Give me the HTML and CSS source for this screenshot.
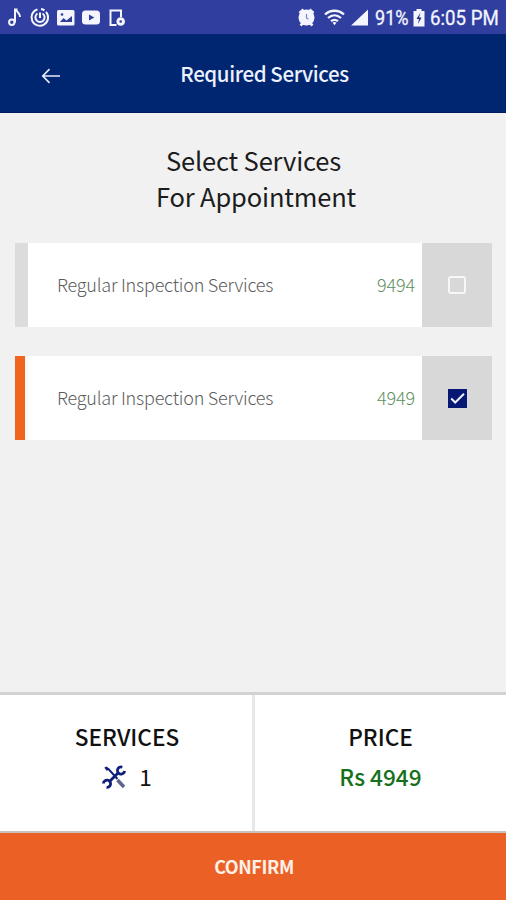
FILE: index.html
```html
<!DOCTYPE html>
<html lang="en">
<head>
<meta charset="utf-8">
<title>Required Services</title>
<link rel="stylesheet" href="styles.css">
</head>
<body>
<div class="screen">
  <div class="status">
    <svg class="status-left" width="140" height="34" viewBox="0 0 140 34" fill="none" stroke="#f4f5ff" stroke-width="2">
      <circle cx="11.800" cy="22.300" r="2.700"/><path d="M15 22.500V9.500h1.500c0 3.500 4 3 3.500 7.500"/>
      <path d="M37.500 9.400a8.300 8.300 0 1 0 8.500 2.500M41 9.100a8.300 8.300 0 0 1 3.500 1.300"/><path d="M37.500 13.500a4.600 4.600 0 1 0 5 0M40 12.500v5.500"/>
      <rect x="57" y="10" width="17.500" height="15.500" rx="1.500" fill="#f4f5ff" stroke="none"/><path d="M60 22l3.500-4 3 2.500 5.500-4.500v6z" fill="#303f9f" stroke="none"/><circle cx="62" cy="14.500" r="1.300" fill="#303f9f" stroke="none"/>
      <rect x="82" y="10.500" width="18" height="14" rx="3.500" fill="#f4f5ff" stroke="none"/><path d="M89 14.500l5.300 3-5.300 3z" fill="#303f9f" stroke="none"/>
      <path d="M121 17v-6.500h-10.500V25h6"/><circle cx="120.700" cy="21.500" r="4.300" fill="#f4f5ff" stroke="none"/><circle cx="120.700" cy="21.500" r="1.300" fill="#303f9f" stroke="none"/>
    </svg>
    <div class="status-right">
      <svg width="80" height="34" viewBox="0 0 80 34" fill="#f4f5ff">
        <circle cx="16.500" cy="17.500" r="8"/><path d="M9.500 13l4-3.500M19.500 9.500l4 3.500M10.500 25.500l3-3M22.500 25.500l-3-3" stroke="#f4f5ff" stroke-width="2.600"/><path d="M16.500 14v4l2 1.300" fill="none" stroke="#7d88c8" stroke-width="1.200"/>
        <path d="M35 14.500c5.500-5 13.500-5 19 0M38 18c4-3.500 9-3.500 13 0M41 21.200c2.300-1.800 4.700-1.800 7 0" fill="none" stroke="#f4f5ff" stroke-width="2.300"/><path d="M42.500 22.500q2-1 4 0l-2 2.800z"/>
        <path d="M61 25.500L78 9.500v16z"/>
      </svg>
      <span class="battery-text"><span>91%</span></span>
      <svg class="battery" width="14" height="34" viewBox="0 0 14 34"><path d="M.5 11h3V9h5v2h3v15.500H.5z" fill="#f4f5ff"/><path d="M7.500 12.500L3.500 19H6l-1 5 3.500-6.500H6z" fill="#202b70"/></svg>
      <span class="clock"><span>6:05 PM</span></span>
    </div>
  </div>
  <header class="header">
    <svg class="back" width="20" height="16" viewBox="0 0 20 16" fill="none" stroke="#e6eaf8" stroke-width="1.700"><path d="M19 8H2M8.500 1.200L1.800 8l6.700 6.800"/></svg>
    <div class="title">Required Services</div>
  </header>
  <main class="main">
    <h1 class="heading">Select Services<br><span class="heading-second">For Appointment</span></h1>
    <div class="service">
      <div class="stripe"></div>
      <div class="service-body"><span class="name">Regular Inspection Services</span><span class="cost">9494</span></div>
      <div class="check"><span class="box"></span></div>
    </div>
    <div class="service selected">
      <div class="stripe"></div>
      <div class="service-body"><span class="name">Regular Inspection Services</span><span class="cost">4949</span></div>
      <div class="check"><span class="box"><svg width="19" height="19" viewBox="0 0 19 19" fill="none" stroke="#f0f2ff" stroke-width="2"><path d="M3.200 9.500l4 4L16 4.700"/></svg></span></div>
    </div>
  </main>
  <section class="summary">
    <div class="cell">
      <div class="label">SERVICES</div>
      <div class="value count">
        <svg width="24" height="24" viewBox="0 0 24 24" fill="none" stroke="#10207a">
          <path d="M3.500 2.500l3 1.500 9 10" stroke-width="2"/><path d="M2.300 2.500l2.500-.8 2 2.200-2 2z" fill="#10207a" stroke="none"/>
          <path d="M15.500 15l6.500 7" stroke="#5b668f" stroke-width="3.500"/>
          <path d="M7 17l10-10" stroke-width="2.800"/>
          <path d="M20.300 2.200A3.600 3.600 0 1 0 22.600 6" stroke-width="2.800"/>
          <path d="M1.400 18.500A3.600 3.600 0 1 1 4.500 22.300" stroke-width="2.800"/>
        </svg>
        <span class="number">1</span>
      </div>
    </div>
    <div class="cell">
      <div class="label">PRICE</div>
      <div class="value amount">Rs 4949</div>
    </div>
  </section>
  <button class="confirm">CONFIRM</button>
</div>
</body>
</html>
```
FILE: styles.css
```css
* { box-sizing: border-box; }
body { margin: 0; font-family: "Noto Sans CJK SC", "Noto Sans", sans-serif; }
.screen { width: 506px; height: 900px; display: flex; flex-direction: column; background: #f1f1f1; overflow: hidden; }
.status { height: 34px; flex: none; display: flex; justify-content: space-between; background: #303f9f; color: #f4f5ff; font-family: Roboto, sans-serif; }
.status svg { display: block; }
.status-right { width: 216px; display: flex; }
.battery-text, .clock { font-size: 21px; line-height: 36px; white-space: nowrap; -webkit-text-stroke: .3px #f4f5ff; }
.battery-text { width: 38px; margin-left: 5px; }
.clock { width: 76px; margin-left: 3px; }
.battery-text span, .clock span { display: inline-block; transform-origin: 0 50%; }
.battery-text span { transform: scaleX(.86); }
.clock span { transform: scaleX(.89); }
.header { height: 79px; flex: none; display: grid; grid-template-columns: 82px 1fr; background: #002671; border-bottom: 1px solid #001d62; }
.back { margin: 34px 0 0 41px; }
.title { width: 365px; text-align: center; color: #edf1fc; font-size: 20.500px; font-weight: 500; letter-spacing: -.4px; line-height: 32px; padding-top: 23px; }
.main { flex: 1; display: flex; flex-direction: column; padding: 29px 14px 0 15px; }
.heading { margin: 0 0 30px; font-size: 25.500px; font-weight: 400; letter-spacing: -.15px; line-height: 35.500px; text-align: center; color: #1c1c1c; }
.heading-second { padding-left: 5px; }
.service { display: flex; height: 84px; margin-bottom: 29px; flex: none; }
.stripe { width: 13px; background: #dcdcdc; }
.selected .stripe { background: #f0641e; border-right: 3px solid #f8f8f8; }
.service-body { width: 394px; display: flex; justify-content: space-between; align-items: center; padding: 0 7px 2px 29px; background: #fff; font-size: 18px; font-weight: 300; color: #5c5c5c; }
.name { letter-spacing: -.22px; }
.cost { color: #5f8f5f; letter-spacing: -.1px; }
.check { flex: 1; display: flex; align-items: center; justify-content: center; background: #d8d8d8; }
.box { width: 18px; height: 18px; border: 2px solid #f7f7f7; border-radius: 3px; }
.selected .box { width: 19px; height: 19px; border: 0; border-radius: 0; background: #061873; }
.box svg { display: block; }
.summary { height: 141px; flex: none; display: grid; grid-template-columns: 255px 1fr; background: #fff; border-top: 3px solid #d2d2d2; border-bottom: 2px solid #c9c1bb; }
.cell { text-align: center; padding-top: 26px; font-size: 22.600px; font-weight: 500; line-height: 32px; color: #111; }
.cell:first-child { padding-left: 2px; border-right: 3px solid #e7e7e7; }
.value { margin-top: 8px; line-height: 32px; }
.count { display: flex; justify-content: center; align-items: center; gap: 13px; }
.number { font-weight: 400; }
.amount { color: #16701a; }
.confirm { height: 67px; flex: none; border: 0; padding: 0 0 1px 2px; background: #eb6125; color: #fff0e8; font-family: inherit; font-size: 18px; letter-spacing: -.4px; font-weight: 700; }
```
